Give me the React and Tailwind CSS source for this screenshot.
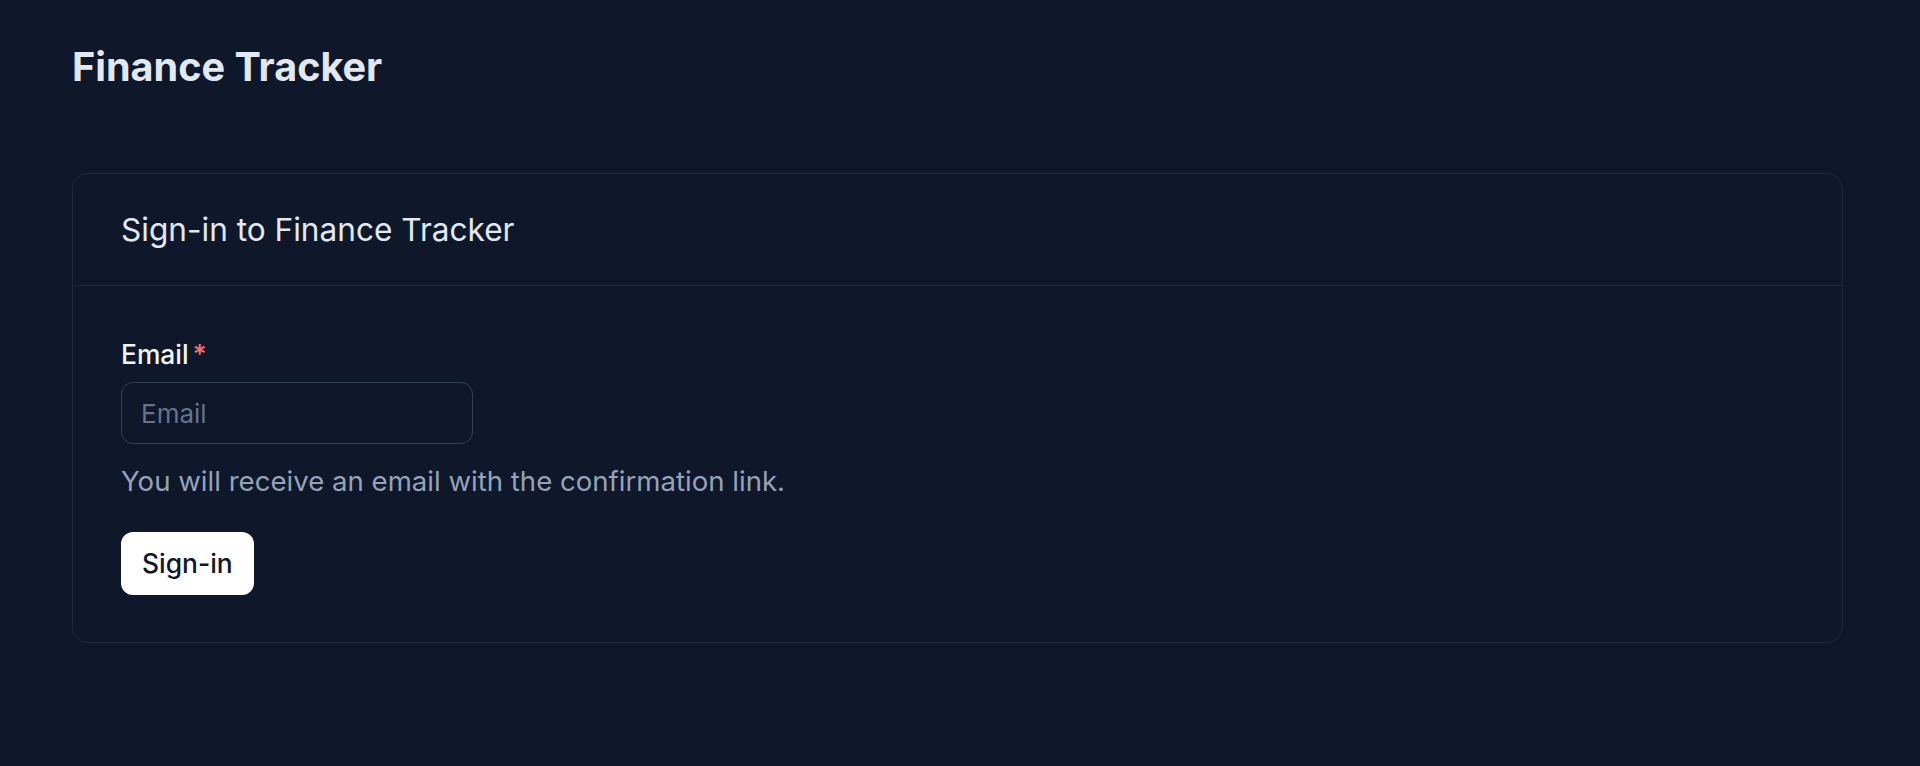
import React from 'react';

export default function App() {
  return (
    <div className="min-h-screen bg-[#0f172a] pl-[72px] pr-[77px] pt-[43px] pb-[60px]" style={{ fontFamily: 'Inter, "Noto Sans", sans-serif' }}>
      <h1 className="text-[39.6px] leading-[48px] font-bold text-[#e2e8f0]">Finance Tracker</h1>

      <div className="mt-[82px] rounded-2xl border border-[#1e293b]">
        <div className="flex h-[112px] items-center border-b border-[#1e293b] px-[48px]">
          <h2 className="text-[31.6px] text-[#e2e8f0]">Sign-in to Finance Tracker</h2>
        </div>

        <div className="px-[48px] pt-[50px] pb-[47px]">
          <label className="flex items-center gap-[4px] text-[26.4px] leading-[36px] font-medium text-[#f1f5f9]">
            Email
            <span className="text-[#f87171]">*</span>
          </label>
          <input
            type="email"
            placeholder="Email"
            className="mt-[10px] block h-[62px] w-[352px] rounded-xl border border-[#334155] bg-transparent px-[19px] text-[26px] text-[#e2e8f0] placeholder:text-[#64748b] outline-none"
          />
          <p className="mt-[21px] text-[27.6px] leading-[32px] text-[#94a3b8]">
            You will receive an email with the confirmation link.
          </p>
          <button
            type="button"
            className="mt-[35px] h-[63px] rounded-xl bg-white px-[21px] text-[26.4px] font-medium text-[#0f172a]"
          >
            Sign-in
          </button>
        </div>
      </div>
    </div>
  );
}
